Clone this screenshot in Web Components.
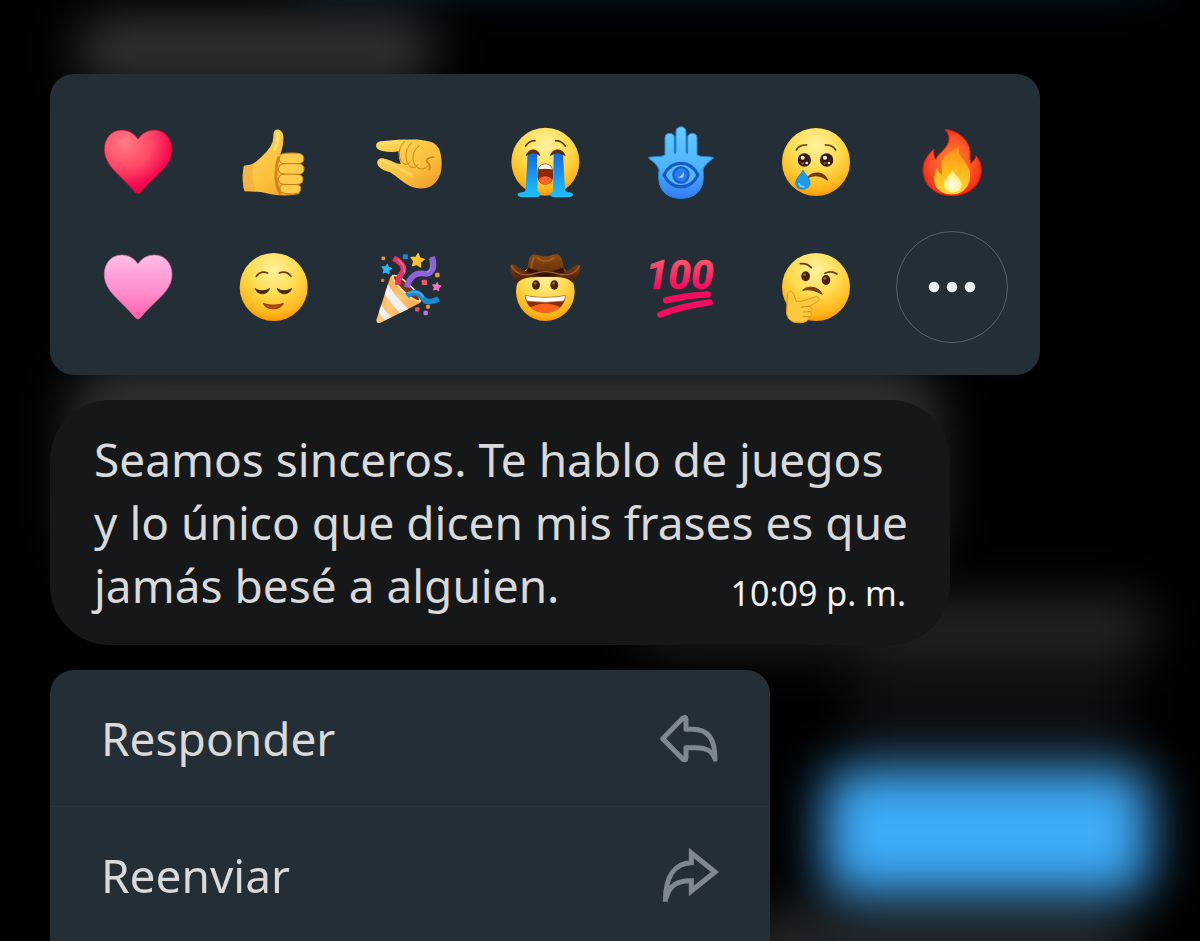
<!DOCTYPE html>
<html lang="es">
<head>
<meta charset="utf-8">
<meta name="viewport" content="width=device-width, initial-scale=1">
<title>Mensaje</title>
<style>
    body {
        background: #000;
        color: #d9d9d9;
        font-family: "Noto Sans", sans-serif;
        height: 100vh;
        margin: 0;
        overflow: hidden;
    }
</style>
</head>
<body>
<message-overlay>
    <reaction-picker></reaction-picker>
    <message-bubble time="10:09 p. m.">Seamos sinceros. Te hablo de juegos<br>y lo único que dicen mis frases es que<br>jamás besé a alguien.</message-bubble>
    <action-menu>
        <action-item icon="reply">Responder</action-item>
        <action-item icon="forward">Reenviar</action-item>
    </action-menu>
</message-overlay>

<script>
// Gradients that several reactions share
const SHARED_DEFS = `
    <radialGradient id="face" cx=".5" cy=".25" r=".8">
        <stop offset="0" stop-color="#fff2a0"/>
        <stop offset=".45" stop-color="#ffdc50"/>
        <stop offset=".8" stop-color="#ffb71a"/>
        <stop offset="1" stop-color="#f08a00"/>
    </radialGradient>
    <linearGradient id="hand" x2="1" y2="1">
        <stop offset="0" stop-color="#ffd95c"/>
        <stop offset=".6" stop-color="#fcc13c"/>
        <stop offset="1" stop-color="#e8952a"/>
    </linearGradient>
    <linearGradient id="tear" x2="0" y2="1">
        <stop offset="0" stop-color="#1769dc"/>
        <stop offset=".7" stop-color="#19aaf5"/>
        <stop offset="1" stop-color="#22bdfb"/>
    </linearGradient>`;

const HEART = 'M120 51C108 33 90 24 71 24C40 24 19 49 19 82C19 132 66 158 107 206Q120 226 132 206C174 158 222 132 222 82C222 49 200 24 170 24C150 24 132 33 120 51Z';

const star = (x, y, size, color) => `<path transform="translate(${x} ${y}) rotate(8) scale(${size})" d="M0-10L3-4L10-3L5 2L6 9L0 6L-6 9L-5 2L-10-3L-3-4Z" fill="${color}" stroke="${color}" stroke-width="2" stroke-linejoin="round"/>`;
const confetti = (x, y, size, color) => `<rect x="${x - size / 2}" y="${y - size / 2}" width="${size}" height="${size}" rx="3" fill="${color}"/>`;

// Every reaction is drawn on a 240 x 240 grid
const REACTIONS = [
    {
        label: 'Corazón rojo',
        art: `<defs><radialGradient id="red-heart" cx=".3" cy=".2" r=".9"><stop offset="0" stop-color="#ff7d84"/><stop offset=".45" stop-color="#ff4766"/><stop offset=".75" stop-color="#f60a50"/><stop offset="1" stop-color="#d8003c"/></radialGradient></defs>
            <path d="${HEART}" fill="url(#red-heart)" stroke="#b80a35" stroke-width="2"/>`
    },
    {
        label: 'Pulgar arriba',
        art: `<path d="M30 131C45 131 60 127 72 114C92 96 106 82 115 62C120 48 116 36 121 27C126 19 141 21 146 34C151 50 147 72 139 98L196 94V216C168 222 122 222 95 213C80 207 58 210 32 208C24 188 25 150 30 131Z" fill="url(#hand)"/>
            <path d="M30 131Q46 131 58 125C53 152 56 184 66 209L32 208C24 188 25 150 30 131Z" fill="#f0a044" opacity=".5"/>
            <path d="M134 104C122 142 122 188 140 216" fill="none" stroke="#bd6a0c" stroke-width="9" opacity=".65"/>
            <g fill="#ffcc4d" stroke="#c47a14" stroke-width="3">
                <path d="M146 95C162 92 184 92 199 95C212 98 213 121 200 124C182 127 160 126 144 124C132 122 134 98 146 95Z"/>
                <path d="M144 126C162 124 184 124 200 126C214 130 213 153 200 156C182 159 160 158 142 155C130 151 131 130 144 126Z"/>
                <path d="M144 157C162 156 184 156 198 158C210 162 210 183 197 186C180 189 160 188 144 186C130 182 131 161 144 157Z"/>
                <path d="M146 188C162 187 180 187 194 189C204 192 202 212 190 214C176 217 160 216 148 213C135 210 134 191 146 188Z"/>
            </g>
            <path d="M131 34C134 50 130 68 122 82" fill="none" stroke="#ffea8a" stroke-width="9" stroke-linecap="round" opacity=".7"/>`
    },
    {
        label: 'Mano pellizcando',
        art: `<path d="M27 82C16 72 22 59 36 58C60 56 88 52 112 53C135 52 160 52 176 58C198 60 212 76 215 97C222 132 218 165 196 185C176 203 145 203 122 192C100 180 82 162 62 150C44 145 30 138 26 128C21 114 32 106 46 110C66 114 78 124 95 126Q88 108 89 88C70 92 40 90 27 82Z" fill="url(#hand)"/>
            <g fill="none" stroke="#cd841c" stroke-width="3" stroke-linecap="round">
                <path d="M108 58C84 74 88 112 101 123C110 130 120 127 125 119"/>
                <path d="M127 64C104 80 108 124 124 134C134 139 143 135 146 128"/>
                <path d="M150 72C128 84 126 122 145 137C158 145 171 140 180 129"/>
                <path d="M194 105C178 106 170 113 174 119C181 126 188 134 180 143" stroke-width="5"/>
            </g>
            <path d="M35 66C62 64 80 60 96 62M36 117C70 122 95 144 128 160" fill="none" stroke="#ffe27c" stroke-width="8" stroke-linecap="round" opacity=".6"/>`
    },
    {
        label: 'Cara llorando a mares',
        art: `<circle cx="121" cy="119" r="102" fill="url(#face)"/>
            <path d="M62 72Q72 56 90 56M152 56Q170 56 181 72" fill="none" stroke="#6b3908" stroke-width="5" stroke-linecap="round"/>
            <path d="M68 94H96L98 209C112 213 108 224 92 226H50C34 224 34 213 48 211Q62 210 62 203Z" fill="url(#tear)"/>
            <path d="M146 94H174L180 203Q182 210 194 211C208 213 208 224 192 226H150C132 224 130 213 144 209Z" fill="url(#tear)"/>
            <path d="M62 103C68 76 102 76 106 103Q84 86 62 103ZM135 103C140 76 176 76 182 103Q158 86 135 103Z" fill="#59300b"/>
            <path d="M98 150C98 116 144 116 144 150V164C144 195 98 195 98 164Z" fill="#8a2b05"/>
            <path d="M101 173C108 159 134 159 141 173C136 191 107 191 101 173Z" fill="#ff6425"/>
            <path d="M101 142C104 122 138 122 141 142Q121 138 101 142Z" fill="#fff"/>`
    },
    {
        label: 'Jamsa',
        art: `<defs><linearGradient id="hamsa" x2="0" y2="1"><stop offset="0" stop-color="#68ccff"/><stop offset=".55" stop-color="#4db4fc"/><stop offset="1" stop-color="#337cf4"/></linearGradient></defs>
            <path d="M22 107C35 101 60 108 72 98V46C72 30 100 30 100 46V92H105V28C105 10 135 10 135 28V92H140V46C140 30 168 30 168 46V98C180 108 205 101 218 107C210 117 190 124 186 145C192 187 178 229 120 229C62 229 48 187 54 145C50 124 30 117 22 107Z" fill="url(#hamsa)" stroke="#2289db" stroke-width="3"/>
            <path d="M102 42V96M138 42V96" stroke="#1f7fd6" stroke-width="5"/>
            <path d="M69 159C92 112 148 112 171 159C148 206 92 206 69 159Z" fill="#55b5fd" stroke="#145bc4" stroke-width="9" stroke-linejoin="round"/>
            <circle cx="120" cy="159" r="23" fill="#2a7cec" stroke="#145bc4" stroke-width="6"/>
            <path d="M127 149C133 164 122 172 111 165C119 164 125 158 127 149Z" fill="#a5dcff"/>`
    },
    {
        label: 'Cara triste con lágrima',
        art: `<circle cx="120" cy="120" r="102" fill="url(#face)"/>
            <path d="M61 84Q70 68 92 69M148 69Q170 68 179 84" fill="none" stroke="#6b3908" stroke-width="5" stroke-linecap="round"/>
            <g fill="#3b1a0d"><circle cx="85" cy="114" r="20"/><circle cx="152" cy="114" r="20"/></g>
            <g fill="#fff"><circle cx="80" cy="107" r="6"/><circle cx="92" cy="123" r="4"/><circle cx="147" cy="107" r="6"/><circle cx="159" cy="123" r="4"/></g>
            <g fill="#8c5140"><circle cx="80" cy="124" r="4"/><circle cx="147" cy="124" r="4"/></g>
            <path d="M96 166C112 147 144 149 154 174Q125 153 96 166Z" fill="#75380a" stroke="#75380a" stroke-width="4" stroke-linejoin="round"/>
            <path d="M81 144C88 158 102 168 102 183C102 208 59 208 59 183C59 168 75 158 81 144Z" fill="#1b9be8" stroke="#0d7ac6" stroke-width="2"/>
            <path d="M69 185Q71 195 83 194" fill="none" stroke="#6edcff" stroke-width="5" stroke-linecap="round"/>`
    },
    {
        label: 'Fuego',
        art: `<defs>
                <radialGradient id="flame" cx=".5" cy=".5" r=".6"><stop offset="0" stop-color="#ff8b2b"/><stop offset=".6" stop-color="#ff5225"/><stop offset="1" stop-color="#f01b12"/></radialGradient>
                <linearGradient id="flame-inner" x2="0" y2="1"><stop offset="0" stop-color="#ff8a1a"/><stop offset=".5" stop-color="#ffb81c"/><stop offset="1" stop-color="#ffd52f"/></linearGradient>
                <radialGradient id="flame-core" cy=".65"><stop offset="0" stop-color="#fffef0"/><stop offset="1" stop-color="#fff07a"/></radialGradient>
            </defs>
            <path d="M99 22C128 24 162 44 172 76C177 94 172 108 176 124C186 118 190 110 192 101C204 114 208 130 208 148C206 192 168 221 121 221C72 221 36 192 33 148C31 122 46 98 66 81C64 94 66 104 71 112C80 92 108 80 111 52C112 40 106 30 99 22Z" fill="url(#flame)" stroke="#d91a10" stroke-width="3"/>
            <path d="M141 72C134 100 158 112 170 138C184 174 164 217 121 217C86 217 62 196 67 164C69 152 72 144 75 138C78 148 84 154 90 158C92 140 84 132 92 112C100 94 124 88 141 72Z" fill="url(#flame-inner)"/>
            <path d="M121 144C126 160 149 168 149 188C149 218 96 218 96 188C96 168 116 160 121 144Z" fill="url(#flame-core)"/>`
    },
    {
        label: 'Corazón rosa',
        art: `<defs><linearGradient id="pink-heart" x2="0" y2="1"><stop offset="0" stop-color="#ffc0e6"/><stop offset=".25" stop-color="#ffa6dc"/><stop offset=".6" stop-color="#ff8ccd"/><stop offset="1" stop-color="#ff5ea6"/></linearGradient></defs>
            <path d="${HEART}" fill="url(#pink-heart)" stroke="#ec6fb4" stroke-width="2"/>`
    },
    {
        label: 'Cara de alivio',
        art: `<circle cx="119" cy="120" r="102" fill="url(#face)"/>
            <path d="M67 88Q80 70 101 78M136 78Q157 70 171 88" fill="none" stroke="#6b3908" stroke-width="5" stroke-linecap="round"/>
            <path d="M63 124C75 133 95 133 107 124C102 146 69 146 63 124ZM129 124C141 133 161 133 173 124C168 146 135 146 129 124Z" fill="#482708" stroke="#482708" stroke-width="2" stroke-linejoin="round"/>
            <path d="M88 169C104 176 132 176 148 169C141 191 95 191 88 169Z" fill="#b54a08" stroke="#8f3806" stroke-width="3" stroke-linejoin="round"/>`
    },
    {
        label: 'Fiesta',
        art: `<defs><linearGradient id="cone" x2="1" y2="1"><stop offset="0" stop-color="#ff9a35"/><stop offset=".5" stop-color="#ffc878"/><stop offset="1" stop-color="#ef8a2c"/></linearGradient></defs>
            <path d="M64 90L22 219Q22 230 33 228L153 168Q160 162 150 144L94 88Q72 78 64 90Z" fill="url(#cone)"/>
            <path d="M57 112Q78 148 118 186L93 198Q62 166 47 142ZM37 173Q49 196 67 211L48 220Q36 210 30 195Z" fill="#f4f1f3"/>
            <path d="M72 86C90 80 148 132 154 160C140 174 66 102 72 86Z" fill="#72351b" stroke="#ffdc90" stroke-width="5"/>
            <g fill="none" stroke-width="17">
                <path d="M74 34C94 45 112 59 99 78Q85 97 87 113" stroke="#e4326b"/>
                <path d="M190 29C200 65 188 83 166 80C138 76 120 91 114 121" stroke="#8f62dc"/>
                <path d="M114 146C132 132 147 135 157 148C169 169 185 166 209 156" stroke="#168bd4"/>
            </g>
            <path d="M86 36Q111 57 105 77M181 35Q192 65 174 76M116 139Q148 126 164 151" fill="none" stroke="#ffffff" stroke-opacity=".25" stroke-width="5"/>
            ${star(145, 40, 2, '#ffc426')}
            ${star(53, 66, 1.5, '#31b3f2')}
            ${star(203, 119, 1.3, '#fa72c3')}
            ${confetti(43, 34, 11, '#e49532')}
            ${confetti(41, 100, 10, '#c98133')}
            ${confetti(109, 29, 15, '#168bd4')}
            ${confetti(205, 84, 13, '#e6a044')}
            ${confetti(166, 106, 16, '#f05469')}
            ${confetti(145, 187, 13, '#e4526a')}
            ${confetti(177, 179, 12, '#e49532')}
            ${confetti(170, 198, 13, '#c071e4')}`
    },
    {
        label: 'Cara con sombrero de vaquero',
        art: `<defs><linearGradient id="hat" x2="0" y2="1"><stop offset="0" stop-color="#8e4c10"/><stop offset=".6" stop-color="#6b320c"/><stop offset="1" stop-color="#4a1c08"/></linearGradient></defs>
            <circle cx="121" cy="134" r="88" fill="url(#face)"/>
            <path d="M18 53C32 47 42 72 62 72C72 60 68 34 78 26C92 16 108 30 122 28C138 30 152 15 165 26C175 36 172 60 182 72C200 72 210 48 224 54C231 62 220 94 202 107C188 89 158 90 121 90C84 90 54 89 38 107C22 96 12 66 18 53Z" fill="url(#hat)"/>
            <path d="M70 62Q121 84 174 62L179 76Q121 100 64 76Z" fill="#351407"/>
            <path d="M87 33Q77 50 80 62M97 33Q121 53 146 33" fill="none" stroke="#b3702c" stroke-width="6" stroke-linecap="round" opacity=".6"/>
            <path d="M18 55C32 80 58 90 88 79Q121 69 154 79C186 90 212 80 224 56" fill="none" stroke="#9c5c35" stroke-width="4"/>
            <g fill="#4c2308"><ellipse cx="93" cy="114" rx="12" ry="14"/><ellipse cx="148" cy="114" rx="12" ry="14"/></g>
            <g fill="#96673a"><circle cx="91" cy="109" r="4"/><circle cx="146" cy="109" r="4"/></g>
            <path d="M61 145C91 153 151 153 181 145C182 214 60 214 61 145Z" fill="#8b2a05"/>
            <path d="M76 181Q121 158 166 181C148 203 94 203 76 181Z" fill="#f7631b"/>
            <path d="M61 145C91 153 151 153 181 145Q181 155 176 162Q121 170 66 162Q60 155 61 145Z" fill="#fff" stroke="#a7612b" stroke-width="2"/>`
    },
    {
        label: 'Cien puntos',
        art: `<defs><linearGradient id="hundred" gradientUnits="userSpaceOnUse" x1="0" y1="25" x2="0" y2="120"><stop offset="0" stop-color="#ff626d"/><stop offset="1" stop-color="#f50c60"/></linearGradient></defs>
            <text x="116" y="126" text-anchor="middle" font-family="Roboto, Liberation Sans, sans-serif" font-size="122" font-weight="700" font-style="italic" fill="url(#hundred)" stroke="url(#hundred)" stroke-width="2">100</text>
            <path d="M75 160Q136 145 200 142M58 203Q124 176 206 166" fill="none" stroke="#f50c60" stroke-width="19" stroke-linecap="round"/>`
    },
    {
        label: 'Cara pensativa',
        art: `<circle cx="120" cy="120" r="102" fill="url(#face)"/>
            <path d="M73 50Q94 48 106 62M147 79Q165 69 183 81" fill="none" stroke="#6b3908" stroke-width="5" stroke-linecap="round"/>
            <g fill="#4c2308"><ellipse cx="89" cy="88" rx="13" ry="15"/><ellipse cx="150" cy="99" rx="13" ry="15"/></g>
            <g fill="#96673a"><circle cx="86" cy="83" r="4"/><circle cx="147" cy="94" r="4"/></g>
            <path d="M80 130C95 114 128 118 139 142Q108 123 80 130Z" fill="#7b3d08" stroke="#7b3d08" stroke-width="3" stroke-linejoin="round"/>
            <path d="M35 143C34 130 50 130 54 143L60 163C82 165 102 152 120 149C132 148 132 162 123 165L99 178C109 180 110 190 102 194C109 199 107 208 99 209C101 221 85 229 64 227C41 226 29 210 32 185Z" fill="#ffc93f" stroke="#e39a1c" stroke-width="3" stroke-linejoin="round"/>
            <path d="M99 178L77 180M102 194L82 195M99 209L82 209" stroke="#d98a18" stroke-width="3" stroke-linecap="round"/>`
    }
];

const ACTION_ICONS = {
    reply: '<path d="M11 92L71 31Q81 24 81 35V64H100C150 64 168 94 168 154C160 127 140 119 110 119H81V149Q81 159 71 153Z" stroke-linejoin="round"/>',
    forward: '<path d="M19 170C19 90 50 54 97 53V24L168 81L97 138V107C60 106 28 120 22 160"/>'
};

function attach(element, html) {
    const template = document.createElement('template');
    template.innerHTML = html;
    element.attachShadow({ mode: 'open' });
    element.shadowRoot.appendChild(template.content.cloneNode(true));
}

// Blurred conversation behind the open message
class ChatBackdrop extends HTMLElement {
    constructor() {
        super();
        attach(this, `
            <style>
                :host {
                    display: block;
                    inset: 0;
                    position: fixed;
                    z-index: -1;
                }

                svg {
                    display: block;
                    height: 100%;
                    width: 100%;
                }
            </style>
            <svg viewBox="0 0 1200 941" preserveAspectRatio="none" aria-hidden="true">
                <filter id="blur" filterUnits="userSpaceOnUse" x="-100" y="-100" width="1400" height="1141" color-interpolation-filters="sRGB">
                    <feGaussianBlur stdDeviation="25"/>
                </filter>
                <g filter="url(#blur)">
                    <rect x="300" y="-60" width="860" height="42" fill="#06324a"/>
                    <rect x="80" y="18" width="350" height="65" rx="20" fill="#353536"/>
                    <rect x="70" y="362" width="870" height="200" rx="50" fill="#303031"/>
                    <rect x="640" y="610" width="510" height="44" rx="15" fill="#1d1d1d"/>
                    <rect x="870" y="600" width="280" height="54" rx="15" fill="#272727"/>
                    <rect x="850" y="650" width="280" height="120" rx="20" fill="#0d0e10"/>
                    <rect x="740" y="910" width="390" height="90" rx="20" fill="#222425"/>
                    <rect x="825" y="770" width="324" height="124" rx="20" fill="#3eacfa"/>
                </g>
            </svg>
        `);
    }
}

class MessageOverlay extends HTMLElement {
    constructor() {
        super();
        attach(this, `
            <style>
                :host {
                    align-items: flex-start;
                    box-sizing: border-box;
                    display: flex;
                    flex-direction: column;
                    gap: 25px;
                    min-height: 100vh;
                    padding: 74px 50px 0;
                }
            </style>
            <chat-backdrop></chat-backdrop>
            <slot></slot>
        `);
    }
}

class ReactionPicker extends HTMLElement {
    constructor() {
        super();
        const buttons = REACTIONS.map(({ label, art }) => `
            <reaction-button label="${label}"><svg viewBox="0 0 240 240" aria-hidden="true">${art}</svg></reaction-button>
        `);
        // The "more" button closes the second row
        buttons.push(`
            <reaction-button class="more" label="Más reacciones">
                <svg viewBox="0 0 240 240" aria-hidden="true" fill="#eef3f8"><circle cx="66" cy="120" r="16"/><circle cx="120" cy="120" r="16"/><circle cx="174" cy="120" r="16"/></svg>
            </reaction-button>
        `);

        attach(this, `
            <style>
                :host {
                    background: #242e36;
                    border-radius: 24px;
                    box-sizing: border-box;
                    display: grid;
                    gap: 13px 0;
                    grid-template-columns: repeat(7, 1fr);
                    justify-items: center;
                    padding: 32px 20px;
                    width: 90%;
                }

                svg {
                    display: block;
                    width: 80px;
                }

                .shared {
                    height: 0;
                    position: absolute;
                    width: 0;
                }

                .more {
                    --ring: #59626a;
                }
            </style>
            <svg class="shared" aria-hidden="true"><defs>${SHARED_DEFS}</defs></svg>
            ${buttons.join('')}
        `);
    }
}

class ReactionButton extends HTMLElement {
    constructor() {
        super();
        attach(this, `
            <style>
                :host {
                    display: block;
                }

                button {
                    align-items: center;
                    background: none;
                    border: 1px solid var(--ring, transparent);
                    border-radius: 50%;
                    cursor: pointer;
                    display: flex;
                    height: 112px;
                    justify-content: center;
                    padding: 0;
                    width: 112px;
                }
            </style>
            <button type="button"><slot></slot></button>
        `);
    }

    connectedCallback() {
        this.shadowRoot.querySelector('button').setAttribute('aria-label', this.getAttribute('label'));
    }
}

class MessageBubble extends HTMLElement {
    constructor() {
        super();
        attach(this, `
            <style>
                :host {
                    align-items: end;
                    background: #151719;
                    border-radius: 60px;
                    box-sizing: border-box;
                    display: grid;
                    font-size: 46px;
                    grid-template-columns: minmax(0, 1fr);
                    line-height: 63px;
                    max-width: 100%;
                    padding: 28px 44px;
                    width: 900px;
                }

                p,
                time {
                    grid-area: 1 / 1;
                    margin: 0;
                }

                p {
                    white-space: nowrap;
                }

                time {
                    color: #f2f2f2;
                    font-size: 34px;
                    justify-self: end;
                    line-height: 48px;
                }
            </style>
            <p><slot></slot></p>
            <time></time>
        `);
    }

    connectedCallback() {
        this.shadowRoot.querySelector('time').textContent = this.getAttribute('time');
    }
}

class ActionMenu extends HTMLElement {
    constructor() {
        super();
        attach(this, `
            <style>
                :host {
                    background: #242e36;
                    border-radius: 24px 24px 0 0;
                    display: flex;
                    flex: 1;
                    flex-direction: column;
                    max-width: 100%;
                    width: 720px;
                }

                ::slotted(:not(:last-child)) {
                    border-bottom: 1px solid #29333b;
                }
            </style>
            <slot></slot>
        `);
    }
}

class ActionItem extends HTMLElement {
    constructor() {
        super();
        attach(this, `
            <style>
                :host {
                    display: block;
                }

                button {
                    align-items: center;
                    background: none;
                    border: 0;
                    color: inherit;
                    cursor: pointer;
                    display: flex;
                    font: inherit;
                    font-size: 46px;
                    height: 136px;
                    justify-content: space-between;
                    padding: 0 51px;
                    width: 100%;
                }

                svg {
                    fill: none;
                    stroke: #7f8890;
                    stroke-width: 15;
                    width: 60px;
                }
            </style>
            <button type="button">
                <span><slot></slot></span>
                <svg viewBox="0 0 180 180" aria-hidden="true"></svg>
            </button>
        `);
    }

    connectedCallback() {
        this.shadowRoot.querySelector('svg').innerHTML = ACTION_ICONS[this.getAttribute('icon')];
    }
}

window.customElements.define('chat-backdrop', ChatBackdrop);
window.customElements.define('reaction-button', ReactionButton);
window.customElements.define('reaction-picker', ReactionPicker);
window.customElements.define('message-bubble', MessageBubble);
window.customElements.define('action-item', ActionItem);
window.customElements.define('action-menu', ActionMenu);
window.customElements.define('message-overlay', MessageOverlay);
</script>
</body>
</html>
